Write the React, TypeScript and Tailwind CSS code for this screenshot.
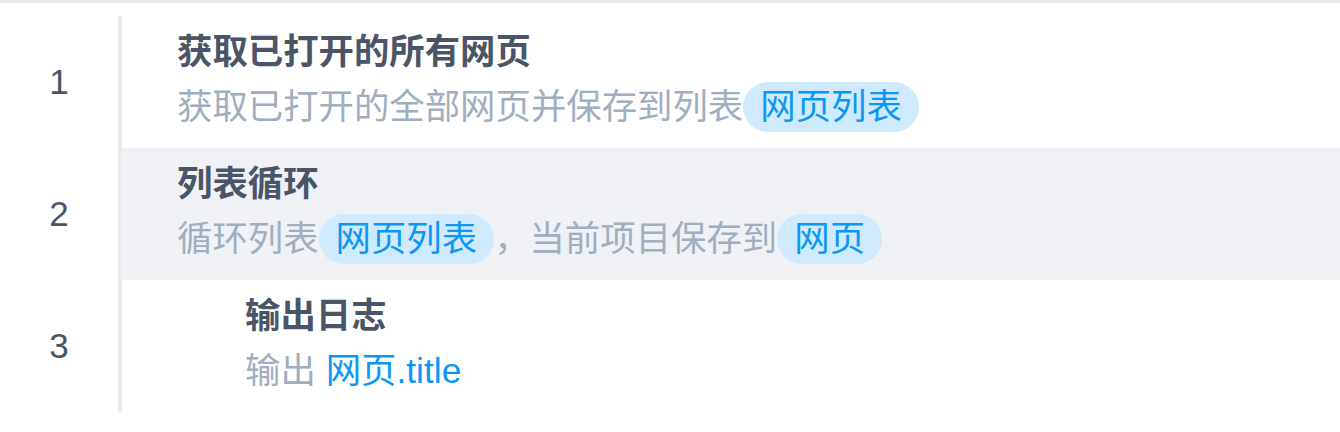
const font = { fontFamily: '"Liberation Sans", "Noto Sans CJK SC", sans-serif' };

function Tag({ children }: { children: React.ReactNode }) {
  return (
    <span className="inline-block rounded-full bg-[#cfe9fd] px-[17px] leading-[50px] text-[#0b98f5]">
      {children}
    </span>
  );
}

type Step = {
  title: string;
  desc: React.ReactNode;
  indent?: boolean;
  active?: boolean;
};

const steps: Step[] = [
  {
    title: '获取已打开的所有网页',
    desc: (
      <>
        获取已打开的全部网页并保存到列表
        <Tag>网页列表</Tag>
      </>
    ),
  },
  {
    title: '列表循环',
    active: true,
    desc: (
      <>
        循环列表
        <Tag>网页列表</Tag>，当前项目保存到
        <Tag>网页</Tag>
      </>
    ),
  },
  {
    title: '输出日志',
    indent: true,
    desc: (
      <>
        输出 <span className="text-[#0b98f5]">网页.title</span>
      </>
    ),
  },
];

export default function App() {
  return (
    <div className="min-h-screen w-[1340px] bg-white" style={font}>
      <div className="h-[3px] bg-[#eaecf0]" />
      <div className="mt-[13px] flex">
        <div className="w-[118px] shrink-0">
          {steps.map((s, i) => (
            <div
              key={i}
              className="flex h-[132px] items-center justify-center text-[35px] text-[#4a5568]"
            >
              {i + 1}
            </div>
          ))}
        </div>
        <div className="flex-1 border-l-4 border-[#eaecf0]">
          {steps.map((s, i) => (
            <div
              key={i}
              className={`h-[132px] pt-[9px] ${s.active ? 'bg-[#eff1f5]' : ''} ${
                s.indent ? 'pl-[123px]' : 'pl-[55px]'
              }`}
            >
              <div className="text-[35.4px] font-bold leading-[55px] text-[#4a5568]">
                {s.title}
              </div>
              <div className="flex items-center text-[35.4px] leading-[55px] text-[#a0aec0]">
                <span className="whitespace-pre">{s.desc}</span>
              </div>
            </div>
          ))}
        </div>
      </div>
    </div>
  );
}
